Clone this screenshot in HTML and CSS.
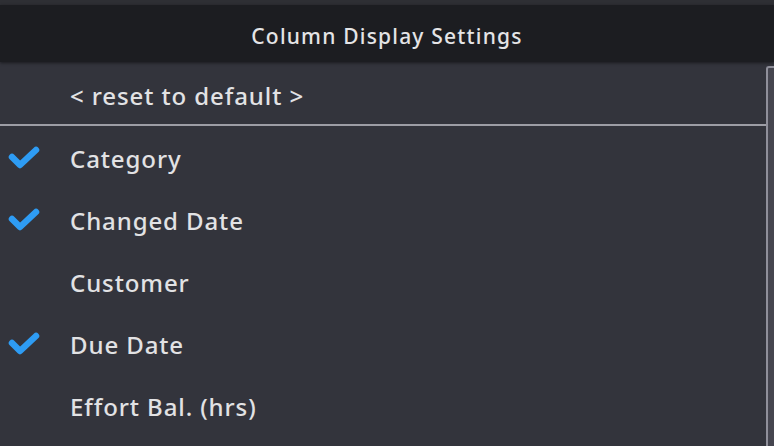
FILE: index.html
```html
<!doctype html>
<html>
    <head>
        <title>Column Display Settings</title>
        <link rel="stylesheet" href="styles.css">
    </head>
    <body>
        <div class="topstrip"></div>
        <div class="header">Column Display Settings</div>

        <div class="main">
            <div class="list">
                <div class="row reset">
                    <span class="check"></span>
                    <span class="label">&lt; reset to default &gt;</span>
                </div>
                <div class="row">
                    <span class="check">
                        <svg width="32" height="26" viewBox="0 0 32 26"><path d="M4 13 L12 21 L28 6" fill="none" stroke="#2e9cf4" stroke-width="6.5" stroke-linecap="round" stroke-linejoin="round"/></svg>
                    </span>
                    <span class="label">Category</span>
                </div>
                <div class="row">
                    <span class="check">
                        <svg width="32" height="26" viewBox="0 0 32 26"><path d="M4 13 L12 21 L28 6" fill="none" stroke="#2e9cf4" stroke-width="6.5" stroke-linecap="round" stroke-linejoin="round"/></svg>
                    </span>
                    <span class="label">Changed Date</span>
                </div>
                <div class="row">
                    <span class="check"></span>
                    <span class="label">Customer</span>
                </div>
                <div class="row">
                    <span class="check">
                        <svg width="32" height="26" viewBox="0 0 32 26"><path d="M4 13 L12 21 L28 6" fill="none" stroke="#2e9cf4" stroke-width="6.5" stroke-linecap="round" stroke-linejoin="round"/></svg>
                    </span>
                    <span class="label">Due Date</span>
                </div>
                <div class="row">
                    <span class="check"></span>
                    <span class="label">Effort Bal. (hrs)</span>
                </div>
            </div>
            <div class="scrollbar">
                <div class="thumb"></div>
            </div>
        </div>
    </body>
</html>
```

FILE: styles.css
```css
body {
    font-family: "Noto Sans", "Open Sans", sans-serif;
    margin: 0;
    padding: 0;
    background: #33343c;
    color: #e2e2e4;
    overflow: hidden;
    height: 446px;
}

.topstrip {
    height: 5px;
    background: #2e2f34;
}

.header {
    height: 57px;
    box-sizing: border-box;
    padding-top: 17px;
    background: #1c1d21;
    box-shadow: 0 1px 3px rgba(0, 0, 0, 0.5);
    text-align: center;
    font-size: 21px;
    font-weight: 500;
    letter-spacing: 1.2px;
    color: #e4e4e6;
    position: relative;
}

.main {
    display: flex;
    height: 384px;
}

.list {
    width: 766px;
}

.row {
    display: flex;
    align-items: center;
    height: 62px;
}

.row.reset .label {
    padding-top: 4px;
}

.row.reset {
    border-bottom: 2px solid #9d9da5;
}

.check {
    width: 70px;
    padding-left: 8px;
    box-sizing: border-box;
    display: flex;
    align-items: center;
}

.label {
    font-size: 24px;
    font-weight: 500;
    letter-spacing: 0.9px;
    padding-top: 2px;
}

.scrollbar {
    width: 8px;
    padding-top: 4px;
    display: flex;
}

.thumb {
    flex: 1;
    border-left: 2px solid #8f8f9a;
    border-top: 2px solid #8f8f9a;
    border-top-left-radius: 3px;
    background: #45454f;
}
```
